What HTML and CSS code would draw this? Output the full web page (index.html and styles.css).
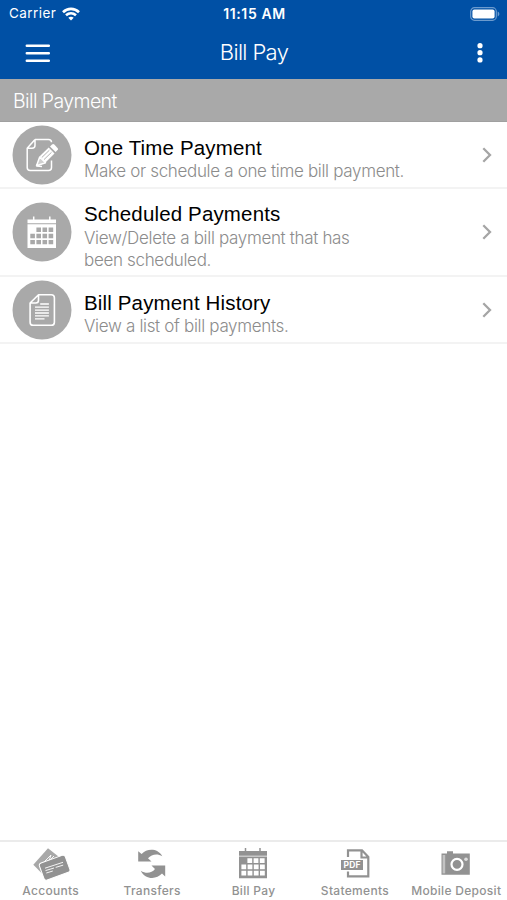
FILE: index.html
```html
<!DOCTYPE html>
<html lang="en">
<head>
    <meta charset="utf-8">
    <title>Bill Pay</title>
    <link rel="stylesheet" href="styles.css">
</head>
<body>
    <header>
        <div class="status">
            <div class="carrier">
                <span>Carrier</span>
                <svg width="18" height="14" viewBox="0 0 18 14" fill="none" stroke="#fff" stroke-width="2.6">
                    <path d="M1 5.2C5.6.7 12.4.7 17 5.2M4 8.3c3-2.7 7-2.7 10 0"/>
                    <path d="M9 13.4 6.3 10.7c1.6-1.4 3.8-1.4 5.4 0z" fill="#fff" stroke="none"/>
                </svg>
            </div>
            <span class="time">11:15 AM</span>
            <svg class="battery" width="30" height="14" viewBox="0 0 30 14">
                <rect x=".7" y=".7" width="25.6" height="12.6" rx="3.8" fill="none" stroke="#6c9bce" stroke-width="1.2"/>
                <rect x="2.4" y="2.4" width="22.2" height="9.2" rx="2" fill="#fff"/>
                <path d="M27.7 4.6c2.2.8 2.2 4 0 4.8z" fill="#6c9bce"/>
            </svg>
        </div>
        <nav class="navbar">
            <svg width="26" height="20" viewBox="0 0 26 20" stroke="#fff" stroke-width="2.5" stroke-linecap="round">
                <path d="M1.8 2.8h22M1.8 10.3h22M1.8 17.8h22"/>
            </svg>
            <h1>Bill Pay</h1>
            <svg class="more" width="6" height="20" viewBox="0 0 6 20" fill="#fff">
                <circle cx="3" cy="2.7" r="2.6"/>
                <circle cx="3" cy="9.7" r="2.6"/>
                <circle cx="3" cy="16.9" r="2.6"/>
            </svg>
        </nav>
    </header>

    <h2 class="section">Bill Payment</h2>

    <main>
        <a class="row">
            <svg class="icon" viewBox="0 0 60 60">
                <circle cx="30" cy="30" r="29.5" fill="#a9a9a9"/>
                <g fill="none" stroke="#fff" stroke-width="1.5" stroke-linejoin="round">
                    <path d="M23 14.4h13.5c2 0 3 1 3 2.8M23 14.4l-7.8 8.8v19.3c0 2 1 3 3 3h18.3c2 0 3-1 3-3v-7M23 14.4v5.8c0 2-1 3-3 3h-4.8"/>
                    <path d="M24.5 40.8l3.2-8.8 5.8 5.7zM24.5 41l5.5.6" fill="#fff" fill-opacity=".45"/>
                </g>
                <path d="M27.7 31.2l9-8.6 5.8 6-9 8.8z" fill="#fff"/>
                <path d="M38 21.4l2-1.9c.8-.7 1.6-.7 2.3 0l3.2 3.4c.7.8.7 1.5 0 2.2l-1.9 1.9z" fill="#fff"/>
                <path d="M29.8 32.5l7.6-7.3M32 34.6l7.5-7.3" stroke="#a9a9a9" stroke-width=".9"/>
            </svg>
            <div class="info">
                <h3>One Time Payment</h3>
                <p>Make or schedule a one time bill payment.</p>
            </div>
            <svg class="chevron" viewBox="0 0 10 16"><path d="M1.3 1.3 8 8l-6.7 6.7"/></svg>
        </a>
        <a class="row tall">
            <svg class="icon" viewBox="0 0 60 60">
                <circle cx="30" cy="30" r="29.5" fill="#a9a9a9"/>
                <path d="M15.5 17.4H44v3.9H15.5zM15.5 22.3H44V46H15.5z" fill="#fff"/>
                <path d="M21.7 14.5v4M37.8 14.5v4" stroke="#fff" stroke-width="1.5"/>
                <path d="M24.4 27.8h16.8M18.3 34h22.9M18.3 40.1h22.9" stroke="#a9a9a9" stroke-width="4.4" stroke-dasharray="4.6 1.5"/>
            </svg>
            <div class="info">
                <h3>Scheduled Payments</h3>
                <p>View/Delete a bill payment that has<br>been scheduled.</p>
            </div>
            <svg class="chevron" viewBox="0 0 10 16"><path d="M1.3 1.3 8 8l-6.7 6.7"/></svg>
        </a>
        <a class="row">
            <svg class="icon" viewBox="0 0 60 60">
                <circle cx="30" cy="30" r="29.5" fill="#a9a9a9"/>
                <g fill="none" stroke="#fff" stroke-width="1.6" stroke-linejoin="round">
                    <path d="M26.5 14.7h12.7c2 0 3.2 1.1 3.2 3v24.5c0 2-1.1 3.1-3.2 3.1H21.2c-2 0-3.1-1.1-3.1-3.1V23zM26.5 14.7v5.5c0 2-.8 2.8-2.8 2.8h-5.6"/>
                    <path d="M28.2 24h8.7M23 27.2h13.9M23 30.1h13.9M23 33h13.9M23 35.9h13.9M23 38.8h9.5" stroke-width="1.3"/>
                </g>
            </svg>
            <div class="info">
                <h3>Bill Payment History</h3>
                <p>View a list of bill payments.</p>
            </div>
            <svg class="chevron" viewBox="0 0 10 16"><path d="M1.3 1.3 8 8l-6.7 6.7"/></svg>
        </a>
    </main>

    <footer>
        <a class="tab">
            <svg width="40" height="36" viewBox="0 0 40 36">
                <path d="M17 2.3 30 12.5 15.5 32 2.3 18.8z" fill="#a8a8a8"/>
                <path d="M11 18l9-9-2 6 5-5" fill="none" stroke="#fff" stroke-width=".9"/>
                <rect x="10" y="12.7" width="27.5" height="18" rx="2.5" transform="rotate(-20 23.7 22)" fill="#929292" stroke="#fff" stroke-width="1"/>
                <path d="M14 22.2l18-5.9M14.5 24.6l8.5-2.6M24.7 21.4l7.5-2.3M15.3 27l6.5-2" stroke="#fff" stroke-width=".9"/>
            </svg>
            <span>Accounts</span>
        </a>
        <a class="tab">
            <svg width="40" height="36" viewBox="0 0 40 36" fill="#929292">
                <path d="M6.2 5.2 9.6 8C14.7 2.4 25.5 1.7 30.3 10.2 25.2 7.2 19.5 8.3 16 12.3l3.5 3.3H6.2z"/>
                <path d="M33.2 30.5 30 27.6C24.5 33.8 13 33.8 8.8 24.7c5 3.2 10.8 2.6 14.2-1.7L19.5 19.4h13.7z"/>
            </svg>
            <span>Transfers</span>
        </a>
        <a class="tab">
            <svg width="40" height="36" viewBox="0 0 40 36">
                <path d="M6 5h28v4.7H6zM6 10.6h28v21.7H6z" fill="#929292"/>
                <path d="M12.5 2v5M27 2v5" stroke="#929292" stroke-width="1.5"/>
                <path d="M14.4 14.6h17.4M8.4 20.9h23.4M8.4 27.2h23.4" stroke="#fff" stroke-width="4.7" stroke-dasharray="4.8 1.4"/>
            </svg>
            <span>Bill Pay</span>
        </a>
        <a class="tab">
            <svg width="40" height="36" viewBox="0 0 40 36">
                <path d="M13 11V4.3h14l6.3 6.6v19.4H13v-4.7M26.5 4.5v7h6.6" fill="none" stroke="#929292" stroke-width="2.2"/>
                <path d="M6 14h22v10H6z" fill="#929292"/>
                <text x="17" y="22.2" text-anchor="middle" textLength="17" class="pdf">PDF</text>
            </svg>
            <span>Statements</span>
        </a>
        <a class="tab">
            <svg width="40" height="36" viewBox="0 0 40 36">
                <path d="M5.5 7.5H11V5.3h6v2.2h16.8v21.2H5.5z" fill="#929292"/>
                <path d="M6.6 9h2.6v18.4H6.6z" fill="#c2c2c2"/>
                <circle cx="21" cy="18.3" r="5.5" fill="#929292" stroke="#fff" stroke-width="2.2"/>
                <circle cx="30" cy="13.3" r="1.8" fill="#ddd"/>
            </svg>
            <span>Mobile Deposit</span>
        </a>
    </footer>
</body>
</html>
```
FILE: styles.css
```css
* {
    box-sizing: border-box;
}

body {
    display: flex;
    flex-direction: column;
    height: 100vh;
    margin: 0;
    overflow: hidden;
    background: #fff;
    font-family: Inter, "Liberation Sans", sans-serif;
}

svg {
    display: block;
    flex: none;
}

h1, h2, h3, p {
    margin: 0;
    white-space: nowrap;
}

header {
    height: 79px;
    background: #0050a5;
    color: #fff;
}

.status {
    display: grid;
    grid-template-columns: 1fr auto 1fr;
    align-items: center;
    height: 27px;
    padding: 0 7px 0 9px;
    font-size: 13.5px;
    line-height: 27px;
}

.carrier {
    display: flex;
    align-items: center;
    gap: 6px;
    letter-spacing: 0.45px;
}

.time {
    font-size: 14px;
    font-weight: 600;
    letter-spacing: 0.6px;
}

.battery {
    justify-self: end;
}

.navbar {
    display: grid;
    grid-template-columns: 1fr auto 1fr;
    align-items: center;
    height: 52px;
    padding: 0 24px 0 25px;
}

.navbar h1 {
    font-size: 22px;
    font-weight: 300;
    line-height: 26px;
    letter-spacing: -0.65px;
    padding-bottom: 2px;
}

.more {
    justify-self: end;
}

.section {
    height: 43px;
    padding: 1px 0 0 13px;
    background: #a9a9a9;
    border-bottom: 1px solid #a0a0a0;
    color: #fff;
    font-size: 19.5px;
    font-weight: 300;
    line-height: 42px;
    letter-spacing: -0.6px;
}

main {
    flex: 1;
}

.row {
    display: flex;
    align-items: center;
    height: 67px;
    padding: 0 15px 0 12px;
    border-bottom: 2px solid #f3f3f3;
}

.row.tall {
    height: 88px;
}

.icon {
    width: 60px;
    height: 60px;
}

.info {
    flex: 1;
    padding: 7px 0 0 12px;
}

.info h3 {
    color: #000;
    font-family: "Liberation Sans", sans-serif;
    font-size: 20.5px;
    font-weight: 400;
    line-height: 25px;
    letter-spacing: 0.15px;
}

.info p {
    color: #8c8c8c;
    font-size: 17px;
    font-weight: 300;
    line-height: 22px;
    letter-spacing: -0.33px;
}

.row.tall p {
    padding-top: 1px;
}

.chevron {
    width: 10px;
    height: 16px;
    fill: none;
    stroke: #a5a5a5;
    stroke-width: 2.3;
}

footer {
    display: grid;
    grid-template-columns: repeat(5, 1fr);
    height: 60px;
    border-top: 2px solid #ebebeb;
}

.tab {
    display: flex;
    flex-direction: column;
    align-items: center;
    padding-top: 4px;
    color: #929292;
    font-size: 12px;
    font-weight: 500;
    line-height: 18px;
    letter-spacing: 0.3px;
    white-space: nowrap;
}

.pdf {
    fill: #fff;
    font-size: 8.5px;
    font-weight: 700;
    letter-spacing: 0;
}
```
